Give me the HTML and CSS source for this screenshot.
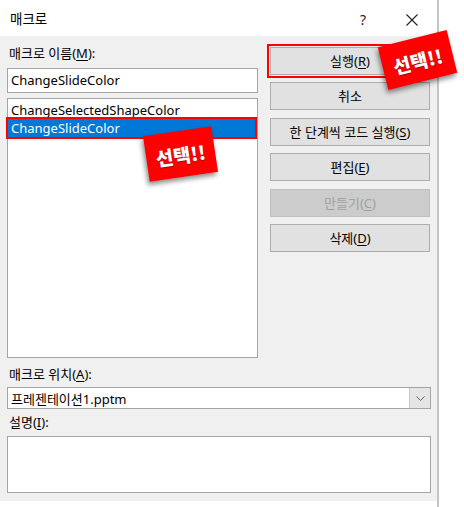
FILE: index.html
```html
<!DOCTYPE html>
<html lang="ko">
<head>
<meta charset="utf-8">
<title>매크로</title>
<link rel="stylesheet" href="styles.css">
</head>
<body>
<div class="window">
  <div class="titlebar">
    <span class="title">매크로</span>
    <span class="help">?</span>
    <svg class="close" width="12" height="12" viewBox="0 0 12 12"><path d="M0.5 0.5 L11.5 11.5 M11.5 0.5 L0.5 11.5" stroke="#222" stroke-width="1.1" fill="none"/></svg>
  </div>
  <div class="body">
    <div class="top">
      <div class="left">
        <div class="label">매크로 이름(<u>M</u>):</div>
        <div class="input">ChangeSlideColor</div>
        <div class="list">
          <div class="item">ChangeSelectedShapeColor</div>
          <div class="item selected">ChangeSlideColor</div>
        </div>
      </div>
      <div class="buttons">
        <div class="btn marked">실행(<u>R</u>)</div>
        <div class="btn">취소</div>
        <div class="btn">한 단계씩 코드 실행(<u>S</u>)</div>
        <div class="btn">편집(<u>E</u>)</div>
        <div class="btn disabled">만들기(<u>C</u>)</div>
        <div class="btn">삭제(<u>D</u>)</div>
      </div>
    </div>
    <div class="label label-loc">매크로 위치(<u>A</u>):</div>
    <div class="select">
      <span class="select-text">프레젠테이션1.pptm</span>
      <span class="drop"><svg width="9" height="5" viewBox="0 0 9 5"><path d="M0.5 0.5 L4.5 4.5 L8.5 0.5" stroke="#606060" stroke-width="1" fill="none"/></svg></span>
    </div>
    <div class="label label-desc">설명(<u>I</u>):</div>
    <div class="textarea"></div>
  </div>
</div>
<div class="badge badge-top">선택!!</div>
<div class="badge badge-list">선택!!</div>
</body>
</html>
```
FILE: styles.css
```css
* { box-sizing: border-box; }
html, body { margin: 0; padding: 0; background: #ffffff; }
body {
  font-family: "Noto Sans", "Noto Sans CJK KR", sans-serif;
  font-size: 13px;
  color: #000;
  width: 464px;
  height: 507px;
  overflow: hidden;
  position: relative;
}
u { text-decoration: underline; text-underline-offset: 2px; }
.window {
  width: 439px;
  height: 507px;
  border-right: 2px solid #c4c4c4;
}
.titlebar {
  height: 36px;
  background: #fff;
  display: flex;
  align-items: center;
  padding-left: 10px;
  padding-right: 19px;
}
.title { flex: 1; font-size: 13.5px; padding-top: 0; }
.help { font-size: 14px; margin-right: 40px; color: #222; padding-top: 2px; }
.close { margin-top: 3px; }
.body {
  background: #f0f0f0;
  padding: 0 6px 8px 7px;
}
.top { display: flex; gap: 12px; }
.left { width: 251px; padding-top: 8px; }
.label {
  height: 18px;
  line-height: 18px;
  font-size: 13px;
  margin-bottom: 6px;
  padding-left: 2px;
}
.input {
  height: 25px;
  border: 1px solid #a5a5a5;
  background: #fff;
  padding-left: 3px;
  line-height: 23px;
}
.list {
  margin-top: 5px;
  height: 260px;
  border: 1px solid #a5a5a5;
  background: #fff;
  padding: 2px 0;
}
.item {
  height: 18px;
  line-height: 18px;
  padding-left: 3px;
}
.item.selected {
  background: #0078d7;
  color: #fff;
  margin-right: 2px;
  outline: 2px solid #ff0000;
}
.buttons {
  width: 160px;
  margin-top: 11px;
  display: flex;
  flex-direction: column;
  gap: 7.4px;
}
.btn {
  height: 28px;
  background: #e1e1e1;
  border: 1px solid #adadad;
  text-align: center;
  line-height: 26px;
}
.btn.marked { outline: 2px solid #ff0000; outline-offset: 1px; }
.btn.disabled { background: #cccccc; border-color: #bfbfbf; color: #a0a0a0; }
.label-loc { margin-top: 7px; margin-bottom: 4px; }
.select {
  height: 22px;
  border: 1px solid #a5a5a5;
  background: #fff;
  display: flex;
  align-items: center;
  padding-left: 3px;
}
.select-text { flex: 1; }
.drop {
  width: 21px;
  height: 20px;
  background: #e5e5e5;
  border-left: 1px solid #c8c8c8;
  display: flex;
  align-items: center;
  justify-content: center;
}
.label-desc { margin-top: 4px; margin-bottom: 5px; }
.textarea {
  height: 57px;
  border: 1px solid #a5a5a5;
  background: #fff;
}
.badge {
  position: absolute;
  background: #ff0000;
  color: #fff;
  font-family: "Noto Sans CJK KR", sans-serif;
  font-weight: 900;
  font-size: 19px;
  display: flex;
  align-items: center;
  justify-content: center;
  box-shadow: -2px 3px 5px rgba(0, 0, 0, 0.45);
  text-shadow: 0 1px 1px rgba(0, 0, 0, 0.35);
}
.badge-top {
  left: 382px;
  top: 38px;
  width: 71px;
  height: 44px;
  transform: rotate(-14deg);
}
.badge-list {
  left: 146px;
  top: 131px;
  width: 69px;
  height: 46px;
  transform: rotate(-8.5deg);
}
```
